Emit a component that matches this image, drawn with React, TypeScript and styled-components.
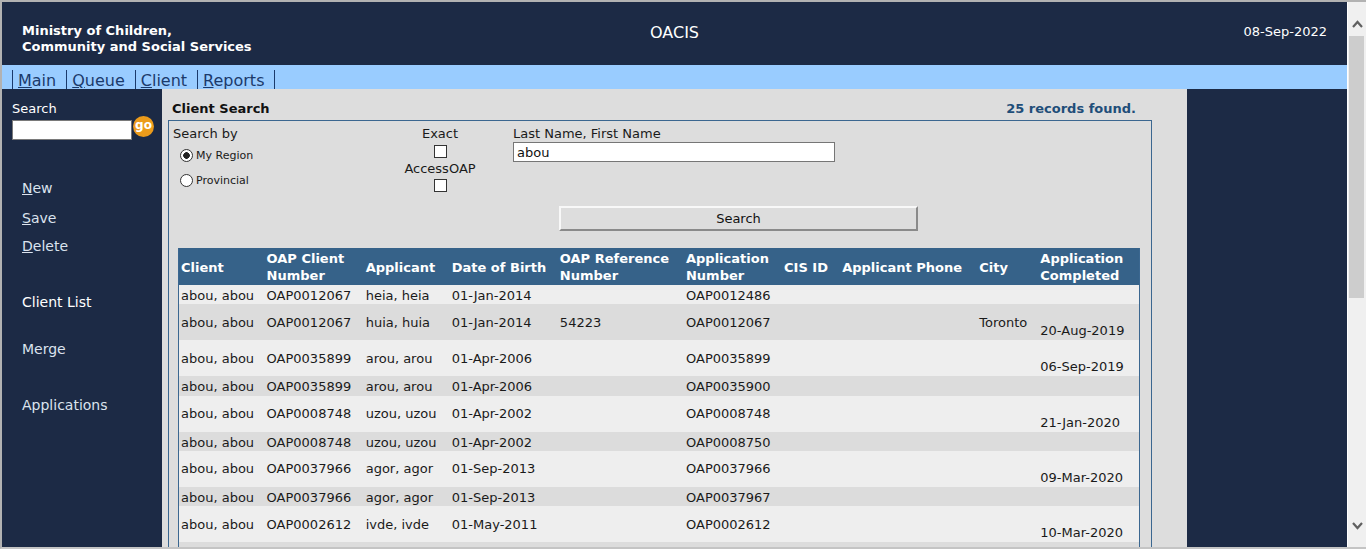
import React from 'react';
import styled, { createGlobalStyle } from 'styled-components';

const NAVY = '#1c2a45';
const STEEL = '#366289';
const EDGE = '#3b6790';

const GlobalStyle = createGlobalStyle`
  html, body {
    margin: 0;
    padding: 0;
    overflow: hidden;
    background: #fff;
  }
  body {
    font-family: "DejaVu Sans", Verdana, sans-serif;
    font-size: 13px;
    color: #1a1a1a;
  }
`;

interface Row {
  client: string;
  number: string;
  applicant: string;
  dob: string;
  reference?: string;
  application: string;
  city?: string;
  completed?: string;
}

const rows: Row[] = [
  { client: 'abou, abou', number: 'OAP0012067', applicant: 'heia, heia', dob: '01-Jan-2014', application: 'OAP0012486' },
  { client: 'abou, abou', number: 'OAP0012067', applicant: 'huia, huia', dob: '01-Jan-2014', reference: '54223', application: 'OAP0012067', city: 'Toronto', completed: '20-Aug-2019' },
  { client: 'abou, abou', number: 'OAP0035899', applicant: 'arou, arou', dob: '01-Apr-2006', application: 'OAP0035899', completed: '06-Sep-2019' },
  { client: 'abou, abou', number: 'OAP0035899', applicant: 'arou, arou', dob: '01-Apr-2006', application: 'OAP0035900' },
  { client: 'abou, abou', number: 'OAP0008748', applicant: 'uzou, uzou', dob: '01-Apr-2002', application: 'OAP0008748', completed: '21-Jan-2020' },
  { client: 'abou, abou', number: 'OAP0008748', applicant: 'uzou, uzou', dob: '01-Apr-2002', application: 'OAP0008750' },
  { client: 'abou, abou', number: 'OAP0037966', applicant: 'agor, agor', dob: '01-Sep-2013', application: 'OAP0037966', completed: '09-Mar-2020' },
  { client: 'abou, abou', number: 'OAP0037966', applicant: 'agor, agor', dob: '01-Sep-2013', application: 'OAP0037967' },
  { client: 'abou, abou', number: 'OAP0002612', applicant: 'ivde, ivde', dob: '01-May-2011', application: 'OAP0002612', completed: '10-Mar-2020' },
  { client: 'abou, abou', number: 'OAP0002612', applicant: 'ivde, ivde', dob: '01-May-2011', application: 'OAP0002613' },
];

const columns = [86, 99, 86, 108, 126, 98, 58, 137, 61, 101];

const navItems = ['Main', 'Queue', 'Client', 'Reports'];

const sideLinks: { label: string; key?: boolean; gap: number; bright?: boolean }[] = [
  { label: 'New', key: true, gap: 39 },
  { label: 'Save', key: true, gap: 12 },
  { label: 'Delete', key: true, gap: 10 },
  { label: 'Client List', gap: 38, bright: true },
  { label: 'Merge', gap: 29 },
  { label: 'Applications', gap: 38 },
];

function Chevron({ up }: { up?: boolean }) {
  return (
    <svg width="11" height="8" viewBox="0 0 11 8">
      <polyline
        points={up ? '1,7 5.5,2 10,7' : '1,1 5.5,6 10,1'}
        fill="none"
        stroke="#606060"
        strokeWidth="2.2"
      />
    </svg>
  );
}

export default function App() {
  return (
    <>
      <GlobalStyle />
      <Frame>
        <Page>
          <Header>
            <Agency>
              Ministry of Children,
              <br />
              Community and Social Services
            </Agency>
            <AppTitle>OACIS</AppTitle>
            <DateText>08-Sep-2022</DateText>
          </Header>

          <NavBar>
            {navItems.map((item, i) => (
              <NavItem key={item} $last={i === navItems.length - 1}>
                <u>{item[0]}</u>
                {item.slice(1)}
              </NavItem>
            ))}
          </NavBar>

          <Body>
            <Sidebar>
              <SideLabel>Search</SideLabel>
              <SideSearch>
                <SideInput type="text" />
                <GoButton>go</GoButton>
              </SideSearch>
              {sideLinks.map((link) => (
                <SideLink key={link.label} $gap={link.gap} $bright={link.bright}>
                  {link.key ? (
                    <>
                      <u>{link.label[0]}</u>
                      {link.label.slice(1)}
                    </>
                  ) : (
                    link.label
                  )}
                </SideLink>
              ))}
            </Sidebar>

            <Content>
              <TitleRow>
                <PageTitle>Client Search</PageTitle>
                <Found>25 records found.</Found>
              </TitleRow>

              <Panel>
                <FormRow>
                  <SearchBy>
                    <FieldLabel>Search by</FieldLabel>
                    <RadioList>
                      <RadioRow>
                        <Radio type="radio" name="scope" defaultChecked />
                        <RadioText>My Region</RadioText>
                      </RadioRow>
                      <RadioRow>
                        <Radio type="radio" name="scope" />
                        <RadioText>Provincial</RadioText>
                      </RadioRow>
                    </RadioList>
                  </SearchBy>

                  <CheckColumn>
                    <FieldLabel>Exact</FieldLabel>
                    <Check type="checkbox" $top={3} />
                    <CheckLabel>AccessOAP</CheckLabel>
                    <Check type="checkbox" $top={2} />
                  </CheckColumn>

                  <NameColumn>
                    <FieldLabel>Last Name, First Name</FieldLabel>
                    <NameInput type="text" defaultValue="abou" />
                  </NameColumn>
                </FormRow>

                <ButtonRow>
                  <SearchButton type="button">Search</SearchButton>
                </ButtonRow>

                <Results>
                  <colgroup>
                    {columns.map((w, i) => (
                      <col key={i} style={{ width: w }} />
                    ))}
                  </colgroup>
                  <thead>
                    <tr>
                      <Th>Client</Th>
                      <Th>OAP Client<br />Number</Th>
                      <Th>Applicant</Th>
                      <Th>Date of Birth</Th>
                      <Th>OAP Reference<br />Number</Th>
                      <Th>Application<br />Number</Th>
                      <Th>CIS ID</Th>
                      <Th>Applicant Phone</Th>
                      <Th>City</Th>
                      <Th>Application<br />Completed</Th>
                    </tr>
                  </thead>
                  <tbody>
                    {rows.map((r, i) => (
                      <Tr key={i} $tall={!!r.completed}>
                        <Td>{r.client}</Td>
                        <Td>{r.number}</Td>
                        <Td>{r.applicant}</Td>
                        <Td>{r.dob}</Td>
                        <Td>{r.reference}</Td>
                        <Td>{r.application}</Td>
                        <Td />
                        <Td />
                        <Td>{r.city}</Td>
                        <Td>
                          {r.completed && (
                            <>
                              <br />
                              {r.completed}
                            </>
                          )}
                        </Td>
                      </Tr>
                    ))}
                  </tbody>
                </Results>
              </Panel>
            </Content>

            <RightFill />
          </Body>
        </Page>

        <Scrollbar>
          <ScrollEnd $up>
            <Chevron up />
          </ScrollEnd>
          <Thumb />
          <ScrollTrack />
          <ScrollEnd>
            <Chevron />
          </ScrollEnd>
        </Scrollbar>
      </Frame>
    </>
  );
}

const Frame = styled.div`
  width: 1366px;
  height: 549px;
  box-sizing: border-box;
  display: flex;
  border-top: 2px solid #b2b2b2;
  border-left: 2px solid #b2b2b2;
  border-bottom: 2px solid #c4c4c4;
  overflow: hidden;
`;

const Page = styled.div`
  flex: 1;
  min-width: 0;
  display: flex;
  flex-direction: column;
  background: ${NAVY};
`;

const Header = styled.div`
  height: 63px;
  flex: none;
  box-sizing: border-box;
  padding: 21px 20px 0 20px;
  display: grid;
  grid-template-columns: 1fr auto 1fr;
  align-items: start;
  color: #fff;
`;

const Agency = styled.div`
  font-weight: bold;
  font-size: 13px;
  line-height: 16px;
`;

const AppTitle = styled.div`
  font-size: 16px;
  line-height: 20px;
`;

const DateText = styled.div`
  justify-self: end;
  margin-top: 1px;
  font-size: 13px;
  line-height: 16px;
`;

const NavBar = styled.div`
  height: 24px;
  flex: none;
  box-sizing: border-box;
  padding: 5px 0 0 10px;
  display: flex;
  background: #99ccff;
`;

const NavItem = styled.a<{ $last?: boolean }>`
  display: block;
  height: 19px;
  line-height: 21px;
  font-size: 16px;
  color: #1b3a6b;
  padding: 0 10px 0 5px;
  border-left: 1px solid #1b3a6b;
  border-right: ${(p) => (p.$last ? '1px solid #1b3a6b' : 'none')};
  text-decoration: none;
  cursor: pointer;
`;

const Body = styled.div`
  flex: 1;
  min-height: 0;
  display: flex;
  background: ${NAVY};
`;

const Sidebar = styled.div`
  width: 160px;
  flex: none;
  box-sizing: border-box;
  padding: 12px 0 0 10px;
  color: #fff;
`;

const SideLabel = styled.div`
  font-size: 13px;
  line-height: 16px;
`;

const SideSearch = styled.div`
  display: flex;
  align-items: flex-start;
`;

const SideInput = styled.input`
  width: 120px;
  height: 20px;
  margin: 3px 0 0 0;
  box-sizing: border-box;
  border: 1px solid #7a7a7a;
  background: #fff;
  padding: 0 3px;
  outline: none;
`;

const GoButton = styled.span`
  width: 21px;
  height: 21px;
  margin: -1px 0 0 1px;
  border-radius: 50%;
  background: #eb9b1b;
  color: #fff;
  font-weight: bold;
  font-size: 12px;
  line-height: 18px;
  text-align: center;
`;

const SideLink = styled.a<{ $gap: number; $bright?: boolean }>`
  display: block;
  margin-top: ${(p) => p.$gap}px;
  padding-left: 10px;
  font-size: 14px;
  line-height: 18px;
  color: ${(p) => (p.$bright ? '#ffffff' : '#dbe3ee')};
  text-decoration: none;
  cursor: pointer;
`;

const Content = styled.div`
  width: 1025px;
  flex: none;
  box-sizing: border-box;
  padding: 11px 0 0 6px;
  background: #dddddd;
  overflow: hidden;
`;

const TitleRow = styled.div`
  width: 984px;
  box-sizing: border-box;
  padding: 1px 16px 0 4px;
  display: flex;
  justify-content: space-between;
  line-height: 16px;
  font-weight: bold;
`;

const PageTitle = styled.div`
  color: #111;
`;

const Found = styled.div`
  color: #1f4e79;
`;

const Panel = styled.div`
  width: 984px;
  margin-top: 3px;
  box-sizing: border-box;
  border: 1px solid ${EDGE};
  padding: 5px 0 12px 4px;
`;

const FormRow = styled.div`
  display: flex;
  align-items: flex-start;
`;

const FieldLabel = styled.div`
  line-height: 16px;
  font-size: 13px;
  color: #1a1a1a;
`;

const SearchBy = styled.div`
  width: 220px;
`;

const RadioList = styled.div`
  margin-top: 3px;
  padding-left: 7px;
  display: flex;
  flex-direction: column;
  gap: 5px;
`;

const RadioRow = styled.label`
  display: flex;
  align-items: center;
  height: 20px;
`;

const Radio = styled.input`
  appearance: none;
  width: 13px;
  height: 13px;
  margin: 0;
  box-sizing: border-box;
  border: 1px solid #333;
  border-radius: 50%;
  background: #fff;

  &:checked {
    background: radial-gradient(circle, #222 0 3px, #fff 3.6px);
  }
`;

const RadioText = styled.span`
  margin-left: 3px;
  font-size: 11px;
  color: #1a1a1a;
`;

const CheckColumn = styled.div`
  width: 94px;
  display: flex;
  flex-direction: column;
  align-items: center;
`;

const CheckLabel = styled(FieldLabel)`
  margin-top: 3px;
`;

const Check = styled.input<{ $top: number }>`
  appearance: none;
  width: 13px;
  height: 13px;
  margin: ${(p) => p.$top}px 0 0 0;
  box-sizing: border-box;
  border: 1px solid #333;
  background: #fff;
`;

const NameColumn = styled.div`
  margin-left: 26px;
`;

const NameInput = styled.input`
  display: block;
  width: 322px;
  height: 20px;
  margin-top: 0;
  box-sizing: border-box;
  border: 1px solid #767676;
  padding: 0 3px;
  font-family: inherit;
  font-size: 13px;
  color: #111;
  background: #fff;
  outline: none;
`;

const ButtonRow = styled.div`
  margin-top: 14px;
  padding-left: 386px;
`;

const SearchButton = styled.button`
  width: 359px;
  height: 25px;
  box-sizing: border-box;
  border: 2px solid;
  border-color: #f8f8f8 #8a8a8a #8a8a8a #f8f8f8;
  background: #dddddd;
  font-family: inherit;
  font-size: 13px;
  color: #111;
  padding: 0;
`;

const Results = styled.table`
  margin: 17px 0 0 5px;
  width: 962px;
  table-layout: fixed;
  border-collapse: collapse;
  border-left: 1px solid ${EDGE};
  border-right: 1px solid ${EDGE};
`;

const Th = styled.th`
  background: ${STEEL};
  color: #fff;
  font-weight: bold;
  font-size: 13px;
  line-height: 17px;
  text-align: left;
  vertical-align: middle;
  padding: 2px 2px 1px;
  white-space: nowrap;
`;

const Td = styled.td`
  font-size: 13px;
  line-height: 17px;
  color: #1a1a1a;
  vertical-align: middle;
  white-space: nowrap;
  overflow: hidden;
`;

const Tr = styled.tr<{ $tall: boolean }>`
  background: #eeeeee;

  &:nth-child(even) {
    background: #dcdcdc;
  }

  ${Td} {
    padding: ${(p) => (p.$tall ? '1px 2px' : '2px 2px 0.25px')};
  }
`;

const RightFill = styled.div`
  flex: 1;
`;

const Scrollbar = styled.div`
  width: 19px;
  flex: none;
  display: flex;
  flex-direction: column;
  background: #f0f0f0;
  border-left: 1px solid #ffffff;
  box-sizing: border-box;
`;

const ScrollEnd = styled.div<{ $up?: boolean }>`
  height: 34px;
  flex: none;
  display: flex;
  justify-content: center;
  align-items: flex-start;
  padding-top: ${(p) => (p.$up ? '18px' : '9px')};
  box-sizing: border-box;
`;

const Thumb = styled.div`
  height: 262px;
  flex: none;
  margin: 0 2px 0 1px;
  background: #cdcdcd;
`;

const ScrollTrack = styled.div`
  flex: 1;
`;
